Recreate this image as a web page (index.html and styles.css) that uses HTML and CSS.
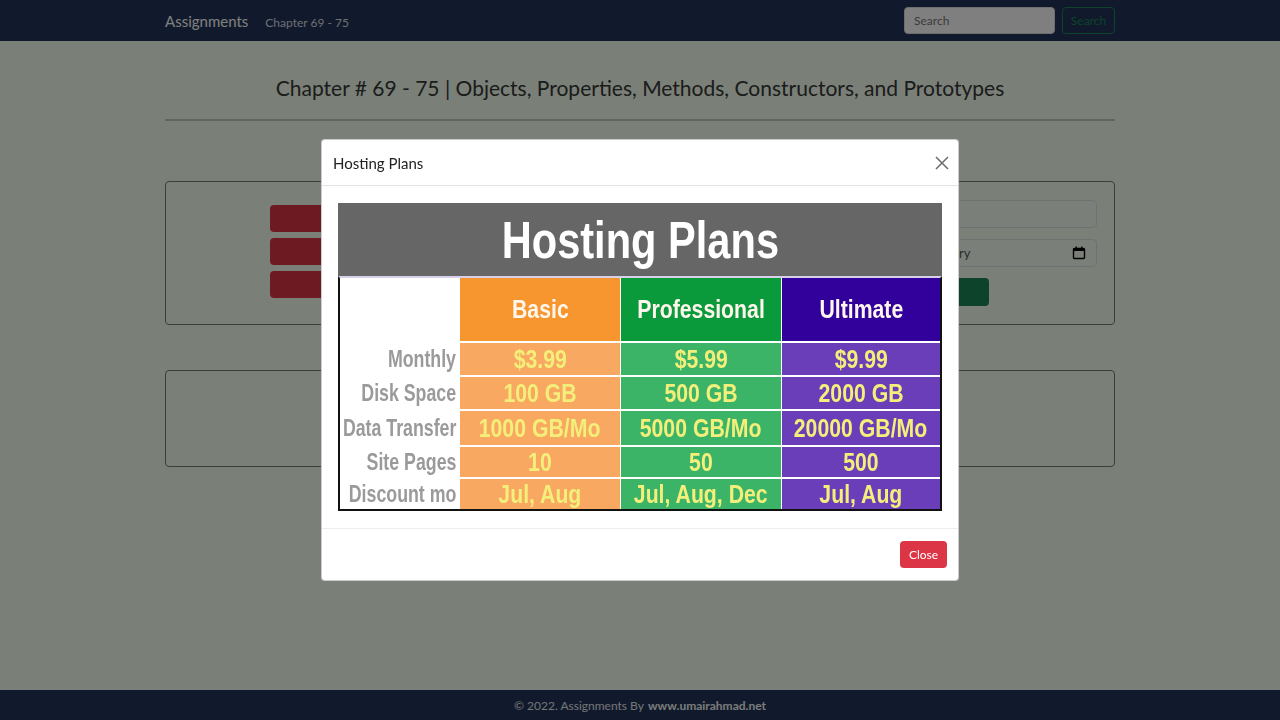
FILE: index.html
```html
<!DOCTYPE html>
<html lang="en">
<head>
<meta charset="utf-8">
<title>Chapter 69 - 75</title>
<link rel="stylesheet" href="styles.css">
</head>
<body>
<div class="page">
  <nav class="navbar">
    <div class="container nav-inner">
      <div class="nav-left">
        <a class="brand" href="#">Assignments</a>
        <a class="nav-link" href="#">Chapter 69 - 75</a>
      </div>
      <form class="search">
        <input class="search-input" type="text" placeholder="Search">
        <button class="search-btn" type="button">Search</button>
      </form>
    </div>
  </nav>

  <main class="container main">
    <h1 class="title">Chapter # 69 - 75 | Objects, Properties, Methods, Constructors, and Prototypes</h1>
    <hr class="rule">
    <section class="card card-one">
      <div class="col-buttons">
        <button class="btn-red" type="button" aria-label="Show plans"></button>
        <button class="btn-red" type="button" aria-label="Show objects"></button>
        <button class="btn-red" type="button" aria-label="Show methods"></button>
      </div>
      <div class="col-form">
        <div class="field" aria-label="Name"></div>
        <div class="field date-field"><span class="date-text">ry</span>
          <svg class="cal" width="14" height="14" viewBox="0 0 14 14"><rect x="1.5" y="2.5" width="11" height="10" rx="1" fill="none" stroke="#000" stroke-width="1.4"/><rect x="1.5" y="2.5" width="11" height="2.5" fill="#000"/><rect x="3.5" y="0.5" width="1.4" height="3" fill="#000"/><rect x="9.1" y="0.5" width="1.4" height="3" fill="#000"/></svg>
        </div>
        <button class="btn-green" type="button" aria-label="Submit"></button>
      </div>
    </section>
    <section class="card card-two"></section>
  </main>

  <footer class="footer">© 2022. Assignments By <b>www.umairahmad.net</b></footer>
</div>

<div class="backdrop"></div>
<div class="modal">
  <div class="modal-dialog">
    <div class="modal-header">
      <h5 class="modal-title">Hosting Plans</h5>
      <svg class="close-x" width="14" height="14" viewBox="0 0 14 14"><path d="M1 1L13 13M13 1L1 13" stroke="#6b6b6b" stroke-width="1.5"/></svg>
    </div>
    <div class="modal-body">
      <div class="plans">
        <div class="plans-head"><span class="plans-title">Hosting Plans</span></div>
        <div class="plans-grid">
          <div class="c lbl"></div>
          <div class="c h basic"><span class="t">Basic</span></div>
          <div class="c h pro"><span class="t">Professional</span></div>
          <div class="c h ult"><span class="t">Ultimate</span></div>

          <div class="c lbl"><span class="l">Monthly</span></div>
          <div class="c d basic"><span class="t">$3.99</span></div>
          <div class="c d pro"><span class="t">$5.99</span></div>
          <div class="c d ult"><span class="t">$9.99</span></div>

          <div class="c lbl"><span class="l">Disk Space</span></div>
          <div class="c d basic"><span class="t">100 GB</span></div>
          <div class="c d pro"><span class="t">500 GB</span></div>
          <div class="c d ult"><span class="t">2000 GB</span></div>

          <div class="c lbl"><span class="l">Data Transfer</span></div>
          <div class="c d basic"><span class="t">1000 GB/Mo</span></div>
          <div class="c d pro"><span class="t">5000 GB/Mo</span></div>
          <div class="c d ult"><span class="t">20000 GB/Mo</span></div>

          <div class="c lbl"><span class="l">Site Pages</span></div>
          <div class="c d basic"><span class="t">10</span></div>
          <div class="c d pro"><span class="t">50</span></div>
          <div class="c d ult"><span class="t">500</span></div>

          <div class="c lbl"><span class="l">Discount mo</span></div>
          <div class="c d basic"><span class="t">Jul, Aug</span></div>
          <div class="c d pro"><span class="t">Jul, Aug, Dec</span></div>
          <div class="c d ult"><span class="t">Jul, Aug</span></div>
        </div>
      </div>
    </div>
    <div class="modal-footer">
      <button class="btn-close" type="button">Close</button>
    </div>
  </div>
</div>
</body>
</html>
```
FILE: styles.css
```css
* { box-sizing: border-box; }
html, body { margin: 0; height: 100%; }
body {
  font-family: Lato, "Noto Sans", sans-serif;
  background: #f5fff1;
  color: #333;
  overflow: hidden;
}
.page {
  min-height: 720px;
  display: flex;
  flex-direction: column;
}
.container { width: 950px; margin: 0 auto; }

.navbar { background: #22345a; height: 41px; }
.nav-inner { display: flex; align-items: center; justify-content: space-between; height: 41px; }
.nav-left { display: flex; align-items: baseline; gap: 17px; }
.brand { color: #ffffff; text-decoration: none; font-size: 15px; }
.nav-link { color: rgba(255,255,255,0.85); text-decoration: none; font-size: 12px; font-weight: 400; }
.search { display: flex; gap: 7px; align-items: center; }
.search-input {
  width: 151px; height: 27px; border: 1px solid #ddd; border-radius: 4px;
  background: #fff; font-family: inherit; font-size: 12px; padding: 0 9px; color: #333;
}
.search-input::placeholder { color: #777; }
.search-btn {
  width: 53px; height: 27px; border: 1px solid #198754; border-radius: 4px;
  background: transparent; color: #198754; font-family: inherit; font-size: 12px; padding: 0;
}

.main { flex: 1; padding-top: 29px; }
.title {
  margin: 0; text-align: center; font-weight: 400; font-size: 21px;
  line-height: 36px; color: #363836;
}
.rule { margin: 13px 0 0; border: 0; border-top: 2px solid #c0c7bd; }

.card { border: 1px solid #7a7a7a; border-radius: 4px; }
.card-one {
  margin-top: 60px; height: 144px; padding: 18px 17px;
  display: grid; grid-template-columns: 1fr 217px; gap: 20px;
}
.col-buttons { display: flex; flex-direction: column; align-items: center; gap: 6px; padding-top: 5px; }
.btn-red {
  width: 504px; height: 27px; border: 0; border-radius: 4px; background: #dc3545;
}
.col-form { display: flex; flex-direction: column; gap: 11px; }
.field {
  width: 100%; height: 28px; border: 1px solid #e2e2e2; border-radius: 4px; background: #f7fff3;
  font-family: inherit; font-size: 13px; padding: 0 10px 0 78px;
}
.date-field { display: flex; align-items: center; justify-content: space-between; color: #555; }
.btn-green {
  width: 109px; height: 28px; border: 0; border-radius: 4px; background: #198754;
}
.card-two { margin-top: 45px; height: 97px; }

.footer {
  background: #22345a; height: 30px; display: flex; align-items: center; justify-content: center;
  color: #e6e8ea; font-size: 12px; gap: 4px;
}
.footer b { color: #f4f4f4; }

.backdrop { position: fixed; inset: 0; background: rgba(0,0,0,0.5); }
.modal {
  position: fixed; inset: 0; display: flex; justify-content: center; align-items: flex-start;
  padding-top: 139px;
}
.modal-dialog {
  width: 638px; background: #fff; border-radius: 4px; border: 1px solid rgba(0,0,0,.2);
}
.modal-header {
  height: 46px; display: flex; align-items: center; justify-content: space-between;
  padding: 0 9px 0 11px; border-bottom: 1px solid #e4e4e4;
}
.modal-title { margin: 0; font-size: 15px; font-weight: 400; color: #222; }
.modal-body { padding: 17px 16px; }
.modal-footer {
  height: 52px; border-top: 1px solid #eeeeee; display: flex; align-items: center;
  justify-content: flex-end; padding: 0 11px;
}
.btn-close {
  width: 47px; height: 27px; border: 0; border-radius: 4px; background: #dc3545; color: #fff;
  font-family: inherit; font-size: 12px; padding: 0;
}

/* hosting plans picture */
.plans { width: 604px; height: 308px; background: #fff; font-family: "Liberation Sans", Arial, sans-serif; font-weight: 700; }
.plans-head {
  height: 73px; background: #666666; display: flex; align-items: center; justify-content: center;
}
.plans-title {
  display: inline-block; color: #fff; font-size: 52px; transform: scaleX(0.8); line-height: 1; margin-top: 0;
}
.plans-grid {
  display: grid;
  grid-template-columns: 119px 160px 160px 158px;
  grid-template-rows: 63px 32px 32px 34px 30px 30px;
  column-gap: 1px; row-gap: 2px;
  border: 2px solid #111; border-top: 2px solid #d6d0ea;
  background: #fff;
  height: 235px;
}
.c { display: flex; align-items: center; justify-content: center; overflow: visible; white-space: nowrap; }
.lbl { justify-content: flex-end; padding-right: 3px; background: #fff; }
.l { display: inline-block; color: #9a9a9a; font-size: 24px; transform: scaleX(0.74); transform-origin: right center; }
.t { display: inline-block; font-size: 25px; transform: scaleX(0.85); }
.h .t { color: #fff6ec; }
.d .t { color: #f3ef7a; }
.h.basic { background: #f7952f; }
.h.pro { background: #0a9a3c; }
.h.ult { background: #32009b; }
.d.basic { background: #f8a860; }
.d.pro { background: #3cb468; }
.d.ult { background: #6a3eb8; }
```
